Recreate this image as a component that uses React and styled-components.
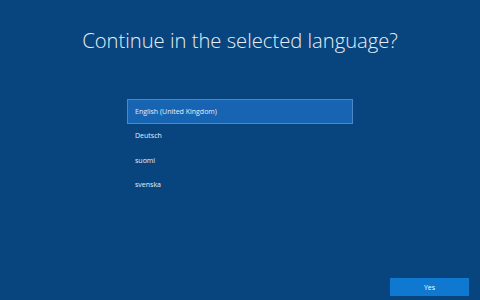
import React, { useState } from "react";
import styled, { createGlobalStyle } from "styled-components";

const GlobalStyle = createGlobalStyle`
  html, body {
    margin: 0;
    padding: 0;
    background: #08457e;
  }
  * {
    box-sizing: border-box;
  }
`;

const Screen = styled.div`
  width: 480px;
  height: 300px;
  background: #08457e;
  display: flex;
  flex-direction: column;
  font-family: "Open Sans", "Liberation Sans", sans-serif;
  color: #ffffff;
  overflow: hidden;
`;

const Title = styled.h1`
  margin: 26px 0 0;
  font-weight: 300;
  font-size: 20.2px;
  line-height: 28px;
  text-align: center;
  color: #e6eef7;
`;

const List = styled.ul`
  list-style: none;
  margin: 45px 0 0 127px;
  padding: 0;
  width: 226px;
  display: flex;
  flex-direction: column;
`;

const Item = styled.li`
  height: 24.5px;
  display: flex;
  align-items: center;
  padding-left: 7px;
  font-size: 7px;
  color: #e8eef6;
  background: ${(p) => (p.$selected ? "#1764b3" : "transparent")};
  border: 1px solid ${(p) => (p.$selected ? "#4b88c9" : "transparent")};
  cursor: pointer;
`;

const Footer = styled.div`
  margin-top: auto;
  display: flex;
  justify-content: flex-end;
  padding: 0 11px 4px 0;
`;

const YesButton = styled.button`
  width: 79px;
  height: 18px;
  border: none;
  background: #0f78d0;
  color: #ffffff;
  font-family: "Open Sans", "Liberation Sans", sans-serif;
  font-size: 7px;
  padding: 0;
  cursor: pointer;
`;

const languages = ["English (United Kingdom)", "Deutsch", "suomi", "svenska"];

export default function App() {
  const [selected, setSelected] = useState(0);
  return (
    <>
      <GlobalStyle />
      <Screen>
        <Title>Continue in the selected language?</Title>
        <List>
          {languages.map((lang, i) => (
            <Item key={lang} $selected={i === selected} onClick={() => setSelected(i)}>
              {lang}
            </Item>
          ))}
        </List>
        <Footer>
          <YesButton>Yes</YesButton>
        </Footer>
      </Screen>
    </>
  );
}
